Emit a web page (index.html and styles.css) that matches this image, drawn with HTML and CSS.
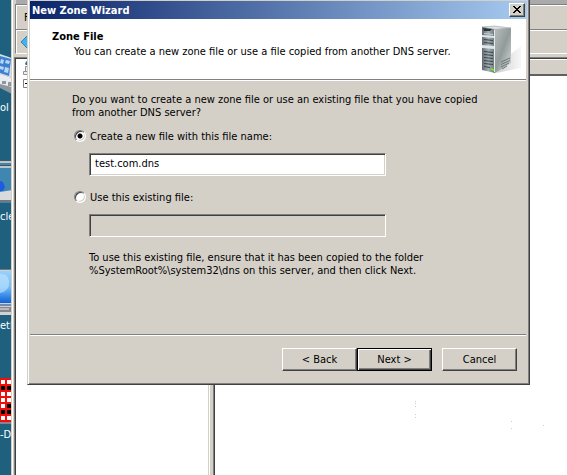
FILE: index.html
```html
<!DOCTYPE html>
<html lang="en">
<head>
<meta charset="utf-8">
<title>New Zone Wizard</title>
<link rel="stylesheet" href="styles.css">
</head>
<body>
<div class="screen">
  <div class="desktop">
    <div class="shortcut">
      <svg viewBox="0 0 12 46" aria-hidden="true">
        <path d="M0 3L12 7V40L0 33Z" fill="#d5dce4"/>
        <path d="M0 5L11 8L9 25L0 22Z" fill="#3f7fd0"/>
        <path d="M1 8l3 1-1 4-3-1zM6 9l4 1-1 3-4-1zM0 15l4 1-1 3-3-1zM5 16l4 1-1 5-4-1z" fill="#b5d8fa"/>
        <path d="M0 23L12 27V43L0 37Z" fill="#8e979f"/>
        <path d="M0 23L12 27V36L0 33Z" fill="#e9ecee"/>
        <path d="M2 30h4v3H2zM8 31h4v4H8z" fill="#8e979f"/>
      </svg>
      <span>ol</span>
    </div>
    <div class="shortcut">
      <svg viewBox="0 0 12 46" aria-hidden="true">
        <path d="M0 1H12V43H0Z" fill="#3f86b0"/>
        <path d="M0 1H12V3H0ZM0 6H12V8H0Z" fill="#b9c6cd"/>
        <path d="M0 0H12V1H0ZM0 5H12V6H0Z" fill="#4d5358"/>
        <path d="M0 21L3 22L5 27L3 31H0Z" fill="#1f5be0"/>
        <path d="M0 32L12 30V42H0Z" fill="#d9dadb"/>
        <path d="M0 40H12V42H0Z" fill="#73787c"/>
      </svg>
      <span>cle</span>
    </div>
    <div class="shortcut">
      <svg viewBox="0 0 12 46" aria-hidden="true">
        <defs><linearGradient id="glass" x2="0" y2="1"><stop offset="0" stop-color="#9ad0fb"/><stop offset=".5" stop-color="#73bdf8"/><stop offset="1" stop-color="#0d62d8"/></linearGradient></defs>
        <path d="M0 0H12V46H0Z" fill="#ced2d4"/>
        <path d="M0 0H12V1H0Z" fill="#6e7880"/>
        <path d="M0 2H12V34H0Z" fill="url(#glass)"/>
        <path d="M0 5Q8 4 9 12Q10 22 0 24Z" fill="#c3e6ff" opacity=".6"/>
        <path d="M0 35H12V37H0Z" fill="#718aac"/>
        <path d="M0 38H12V43H0Z" fill="#85878a"/>
        <path d="M0 39H9V41H0Z" fill="#b8b8b8"/>
      </svg>
      <span>etl</span>
    </div>
    <div class="shortcut">
      <svg viewBox="0 0 12 46" aria-hidden="true" shape-rendering="crispEdges">
        <path d="M0 0H12V44H0Z" fill="#f20d0d"/>
        <path d="M1 2h4v4H1zM7 2h4v4H7zM1 14h4v4H1zM7 14h4v4H7zM1 20h4v4H1zM7 20h4v4H7zM1 26h4v4H1zM1 38h4v4H1zM7 38h4v4H7z" fill="#fff"/>
        <path d="M1 8h4v4H1zM7 8h5v4H7zM7 26h5v4H7zM1 32h4v4H1zM7 32h5v4H7z" fill="#000"/>
        <path d="M0 44H12V46H0Z" fill="#85858a"/>
      </svg>
      <span>-Di</span>
    </div>
  </div>

  <div class="console">
    <div class="console-title"></div>
    <div class="console-menu">F</div>
    <div class="console-tools">
      <svg viewBox="0 0 16 18" aria-hidden="true"><path d="M1 9L9 1V5H16V13H9V17Z" fill="#43b2ed" stroke="#2b84bd"/></svg>
    </div>
    <div class="panes">
      <div class="tree">
        <svg viewBox="0 0 14 32" aria-hidden="true">
          <path d="M3 5Q4 1 9 1V6H4Z" fill="#1e63c8"/><path d="M4 3L8 1V5L6 6Z" fill="#2aa32a"/>
          <path d="M3.500 7.500h8v5h-8zM1.500 12.500h10v3h-10z" fill="#eee" stroke="#8c9299"/>
          <path d="M1.500 20.500h8v8h-8z" fill="#fff" stroke="#808080"/><path d="M3 24.500h5M5.500 22v5" stroke="#000"/>
        </svg>
      </div>
      <div class="splitter"></div>
      <div class="details">
        <div class="columns"></div>
        <svg class="specks" viewBox="0 0 187 95" aria-hidden="true" shape-rendering="crispEdges"><path d="M35 21h1v1h-1zM35 23h1v1h-1zM35 26h1v1h-1zM35 34h1v1h-1zM35 37h1v1h-1zM131 41h1v1h-1zM131 48h1v1h-1zM163 45h1v1h-1zM19 4h1v1h-1z" fill="#ccc"/></svg>
      </div>
    </div>
  </div>

  <form class="dialog" role="dialog" aria-labelledby="wizard-title">
    <div class="titlebar">
      <h1 id="wizard-title">New Zone Wizard</h1>
      <button type="button" class="close" aria-label="Close">
        <svg viewBox="0 0 8 7" aria-hidden="true" shape-rendering="crispEdges"><path d="M0 0h2v1h1v1h2V1h1V0h2v1H7v1H6v1H5v1h1v1h1v1h1v1H6V6H5V5H3v1H2v1H0V6h1V5h1V4h1V3H2V2H1V1H0z"/></svg>
      </button>
    </div>
    <header class="heading">
      <div>
        <h2>Zone File</h2>
        <p>You can create a new zone file or use a file copied from another DNS server.</p>
      </div>
      <svg viewBox="0 0 42 50" aria-hidden="true">
        <defs>
          <linearGradient id="side" x2="1" y2="1"><stop offset="0" stop-color="#b8bebe"/><stop offset=".5" stop-color="#929b9b"/><stop offset="1" stop-color="#d9dddd"/></linearGradient>
          <linearGradient id="front" x2="1"><stop offset="0" stop-color="#5d6970"/><stop offset=".5" stop-color="#a6b0b4"/><stop offset="1" stop-color="#66737a"/></linearGradient>
          <linearGradient id="shade" x2="1"><stop offset="0" stop-color="#cfcfcf"/><stop offset="1" stop-color="#f7f7f7"/></linearGradient>
        </defs>
        <path d="M16 48L31 29L41 21V43Z" fill="url(#shade)"/>
        <path d="M2 2L14 1L31 3L15 5Z" fill="#dce0e0" stroke="#8a9292" stroke-width=".5"/>
        <path d="M14 4L31 3V38L15 48Z" fill="url(#side)"/>
        <path d="M2 2L14 4L15 48L2 45Z" fill="url(#front)"/>
        <path d="M3 3L12 4L10 6H4Z" fill="#263238"/>
        <path d="M2 10L14 11V13L2 12ZM2 20L14 21V24L2 23Z" fill="#dfe5e6"/>
        <path d="M4 14.500l9 1M4 17.500l9 1M4 26.500l9 1M4 29.500l9 1M4 32.500l9 1M4 35.500l9 1M4 38.500l9 1M4 41.500l6 1" stroke="#39454c"/>
        <path d="M4 8.500l9 1" stroke="#c8d0d2"/>
        <path d="M21 37l9-4M21 39.500l9-4M21 42l8-4M22 44l5-3" stroke="#6d7777"/>
        <path d="M14.500 5V47" stroke="#e5e9e9"/>
        <path d="M11 43l3 1v2l-3-1z" fill="#62f000"/>
      </svg>
    </header>
    <main class="content">
      <p>Do you want to create a new zone file or use an existing file that you have copied<br>from another DNS server?</p>
      <div class="choice">
        <input type="radio" name="source" id="create" checked>
        <label for="create">Create a new file with this file name:</label>
      </div>
      <input class="field" type="text" value="test.com.dns" aria-label="New file name">
      <div class="choice">
        <input type="radio" name="source" id="existing">
        <label for="existing">Use this existing file:</label>
      </div>
      <input class="field" type="text" aria-label="Existing file name" disabled>
      <p class="note">To use this existing file, ensure that it has been copied to the folder<br>%SystemRoot%\system32\dns on this server, and then click Next.</p>
    </main>
    <footer class="actions">
      <button type="button">&lt; Back</button>
      <button type="submit" class="default">Next &gt;</button>
      <button type="button" class="cancel">Cancel</button>
    </footer>
  </form>
</div>
</body>
</html>
```
FILE: styles.css
```css
* { box-sizing: border-box; }

body {
  margin: 0;
  font: 11px/13px "DejaVu Sans Condensed", "DejaVu Sans", sans-serif;
  color: #000;
}

h1, h2, p { margin: 0; font-size: inherit; }
svg { display: block; flex: none; }
button, input { font: inherit; color: inherit; }

.screen {
  position: relative;
  display: flex;
  height: 100vh;
  overflow: hidden;
  background: #fff;
}

/* Desktop behind the console */
.desktop {
  flex: none;
  width: 11px;
  padding-top: 51px;
  overflow: hidden;
  background: #1f607f;
}
.shortcut { height: 109px; white-space: nowrap; color: #fff; }
.shortcut svg { width: 12px; height: 46px; }
.shortcut span { display: block; margin-top: 4px; }

/* Management console */
.console {
  flex: 1;
  display: flex;
  flex-direction: column;
  min-width: 0;
  padding-left: 2px;
  border-left: 1px solid #d4d0c8;
  background: #d4d0c8;
  box-shadow: inset 1px 0 #fff;
}
.console-title { height: 4px; margin-left: 2px; background: #aaa; }
.console-menu, .console-tools {
  height: 25px;
  margin-left: 1px;
  border: 1px solid #808080;
  border-width: 1px 0 0 1px;
  box-shadow: inset 1px 1px #fff;
}
.console-menu { padding: 6px 8px; }
.console-tools { padding: 3px 4px; border-bottom: 1px solid #fff; }
.console-tools svg { width: 16px; height: 18px; }
.panes { flex: 1; display: flex; margin-top: 3px; }
.tree, .details {
  border: 1px solid #808080;
  border-width: 1px 0 0 1px;
  box-shadow: inset 1px 1px #404040;
  background: #fff;
}
.tree { width: 195px; border-right: 1px solid #d4d0c8; padding: 1px 7px; }
.tree svg { width: 14px; height: 32px; }
.splitter { width: 4px; border-left: 1px solid #fff; }
.details { flex: 1; display: flex; flex-direction: column; justify-content: space-between; padding: 2px 0 0 2px; }
.columns { height: 16px; background: #d4d0c8; border-bottom: 2px solid #606060; }
.specks { width: 187px; height: 95px; align-self: flex-end; }

/* Wizard dialog, floating over the console */
.dialog {
  position: absolute;
  top: 0;
  left: 27px;
  right: 37px;
  padding: 1px 1px 0;
  border: 1px solid #404040;
  border-width: 0 1px 1px 1px;
  border-left-color: #d4d0c8;
  background: #d4d0c8;
  box-shadow: inset 1px 0 #fff, inset -1px -1px #808080;
}
.titlebar {
  display: flex;
  align-items: center;
  justify-content: space-between;
  height: 18px;
  margin: 0 1px;
  padding: 0 2px;
  background: linear-gradient(to right, #0a246a, #a6caf0);
}
.titlebar h1 { font-weight: bold; color: #fff; }
.close {
  display: grid;
  place-items: center;
  width: 16px;
  height: 14px;
  padding: 0 1px 1px 0;
}
.close svg { width: 8px; height: 7px; }

.heading {
  display: flex;
  justify-content: space-between;
  height: 61px;
  margin: 0 2px 0 1px;
  padding: 6px 4px 0 22px;
  border-bottom: 1px solid #808080;
  background: #fff;
}
.heading h2 { margin-top: 5px; }
.heading p { margin: 2px 0 0 22px; }
.heading svg { width: 42px; height: 50px; }

.content {
  margin: 0 2px 0 1px;
  padding: 12px 42px 57px;
  border-top: 1px solid #fff;
  border-bottom: 1px solid #808080;
}
.choice { display: flex; align-items: center; gap: 4px; height: 14px; margin: 10px 0 10px 2px; }
.choice label { padding-top: 1px; }
.choice input {
  appearance: none;
  width: 12px;
  height: 12px;
  margin: 0;
  border: 1px solid;
  border-color: #808080 #fff #fff #808080;
  border-radius: 50%;
  background: #fff;
  box-shadow: inset 1px 1px #404040, inset -1px -1px #d4d0c8;
}
.choice input:checked { background: radial-gradient(circle, #000 2px, #fff 3px); }
.field {
  display: block;
  width: 297px;
  height: 23px;
  margin: 0 0 14px 17px;
  padding: 0 5px 2px;
  border: 1px solid;
  border-color: #808080 #fff #fff #808080;
  background: #fff;
  box-shadow: inset 1px 1px #404040, inset -1px -1px #d4d0c8;
}
.field:disabled { background: #d4d0c8; }
.note { margin-left: 17px; }

.actions {
  display: flex;
  justify-content: flex-end;
  margin: 0 2px 0 1px;
  padding: 12px 9px 13px;
  border-top: 1px solid #fff;
}
button {
  border: 1px solid;
  border-color: #fff #404040 #404040 #fff;
  border-radius: 0;
  background: #d4d0c8;
  box-shadow: inset -1px -1px #808080;
}
.actions button { width: 75px; height: 23px; padding: 0 0 1px; }
.actions .default {
  border-color: #000;
  box-shadow: inset 1px 1px #fff, inset -1px -1px #404040, inset -2px -2px #808080;
}
.actions .cancel { margin-left: 10px; }
```
